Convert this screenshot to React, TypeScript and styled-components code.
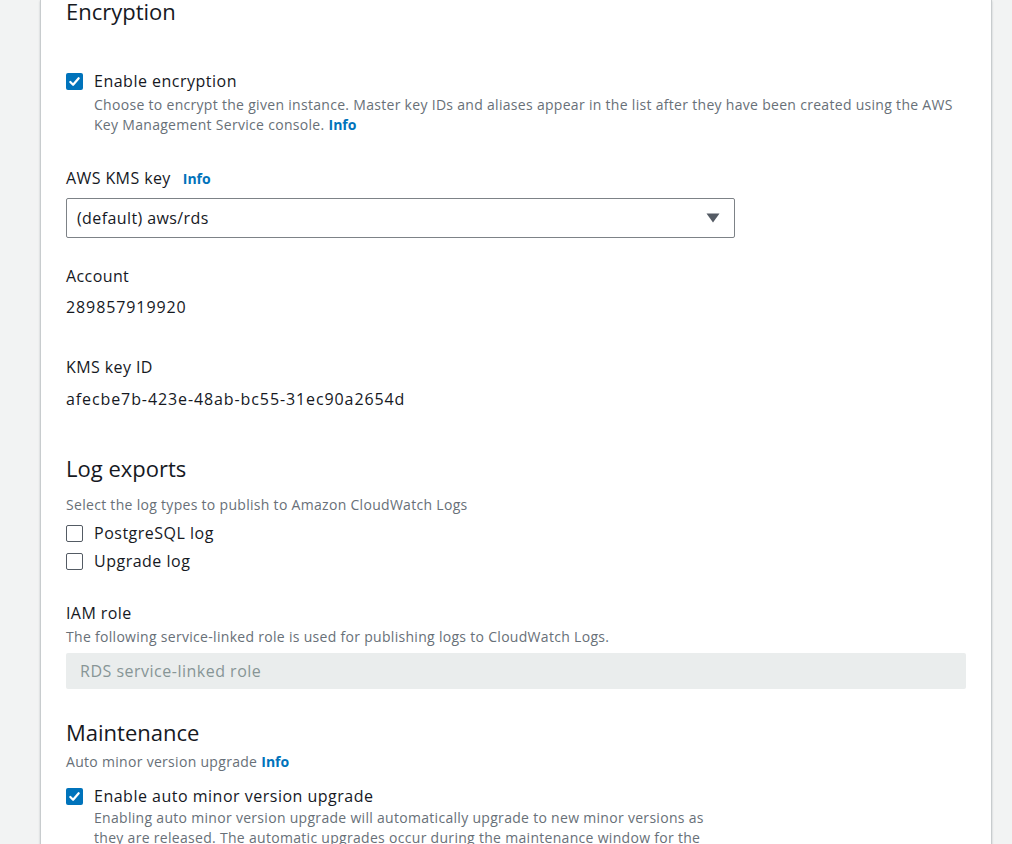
import styled, { createGlobalStyle } from "styled-components";

const GlobalStyle = createGlobalStyle`
  html, body {
    margin: 0;
    padding: 0;
    background: #f2f3f3;
  }
  body {
    font-family: "Open Sans", "Noto Sans", Arial, sans-serif;
    color: #16191f;
  }
`;

const Page = styled.div`
  width: 1012px;
  height: 844px;
  overflow: hidden;
  background: #f2f3f3;
`;

const Panel = styled.div`
  margin-left: 40px;
  width: 952px;
  min-height: 900px;
  background: #ffffff;
  border-left: 1px solid #c8ccce;
  border-right: 1px solid #c8ccce;
  box-shadow: 0 1px 2px rgba(0, 28, 36, 0.2);
  padding: 0 25px;
  box-sizing: border-box;
  display: flex;
  flex-direction: column;
`;

const Heading = styled.h2<{ $mt?: number }>`
  margin: ${({ $mt }) => $mt ?? 0}px 0 0;
  font-size: 22px;
  line-height: 26px;
  font-weight: 400;
  color: #16191f;
`;

const Label = styled.div<{ $mt?: number }>`
  margin-top: ${({ $mt }) => $mt ?? 0}px;
  font-size: 16px;
  line-height: 22px;
  letter-spacing: 0.4px;
  color: #16191f;
  display: flex;
  align-items: baseline;
`;

const Value = styled.div<{ $mt?: number }>`
  margin-top: ${({ $mt }) => $mt ?? 0}px;
  font-size: 16px;
  line-height: 22px;
  letter-spacing: 0.9px;
  color: #16191f;
`;

const Description = styled.div<{ $mt?: number; $indent?: boolean }>`
  margin-top: ${({ $mt }) => $mt ?? 0}px;
  padding-left: ${({ $indent }) => ($indent ? 28 : 0)}px;
  font-size: 14px;
  line-height: 20px;
  letter-spacing: 0.3px;
  color: #687078;
`;

const InfoLink = styled.a<{ $gap?: number }>`
  margin-left: ${({ $gap }) => $gap ?? 4}px;
  font-size: 14px;
  font-weight: 700;
  letter-spacing: 0;
  color: #0073bb;
  text-decoration: none;
  cursor: pointer;
`;

const CheckRow = styled.label<{ $mt?: number }>`
  margin-top: ${({ $mt }) => $mt ?? 0}px;
  display: flex;
  align-items: center;
  gap: 11px;
  height: 24px;
  font-size: 16px;
  letter-spacing: 0.5px;
  color: #16191f;
  cursor: pointer;
`;

const Box = styled.span<{ $checked?: boolean }>`
  width: 17px;
  height: 17px;
  box-sizing: border-box;
  border-radius: 2px;
  border: ${({ $checked }) => ($checked ? "none" : "1.5px solid #545b64")};
  background: ${({ $checked }) => ($checked ? "#0073bb" : "#ffffff")};
  display: flex;
  align-items: center;
  justify-content: center;
  flex-shrink: 0;
`;

const Select = styled.div<{ $mt?: number }>`
  margin-top: ${({ $mt }) => $mt ?? 0}px;
  width: 669px;
  height: 40px;
  box-sizing: border-box;
  border: 1px solid #7d8287;
  border-radius: 2px;
  display: flex;
  align-items: center;
  justify-content: space-between;
  padding: 0 14px 0 10px;
  font-size: 16px;
  letter-spacing: 0.4px;
  color: #16191f;
`;

const DisabledInput = styled.div<{ $mt?: number }>`
  margin-top: ${({ $mt }) => $mt ?? 0}px;
  height: 36px;
  background: #eaeded;
  border-radius: 2px;
  display: flex;
  align-items: center;
  padding-left: 14px;
  font-size: 16px;
  letter-spacing: 0.5px;
  color: #879596;
`;

const Check = ({ checked, label, mt }: { checked?: boolean; label: string; mt?: number }) => (
  <CheckRow $mt={mt}>
    <Box $checked={checked}>
      {checked ? (
        <svg width="13" height="13" viewBox="0 0 14 14">
          <polyline
            points="2.5,7.5 5.5,10.5 11.5,3.5"
            fill="none"
            stroke="#ffffff"
            strokeWidth="2.4"
            strokeLinecap="round"
            strokeLinejoin="round"
          />
        </svg>
      ) : null}
    </Box>
    {label}
  </CheckRow>
);

const App = () => {
  return (
    <Page>
      <GlobalStyle />
      <Panel>
        <Heading $mt={-2}>Encryption</Heading>

        <Check checked label="Enable encryption" mt={45} />
        <Description $mt={2} $indent>
          Choose to encrypt the given instance. Master key IDs and aliases appear in the list after they have been created using the AWS
          <br />
          Key Management Service console.
          <InfoLink>Info</InfoLink>
        </Description>

        <Label $mt={32}>
          AWS KMS key
          <InfoLink $gap={12}>Info</InfoLink>
        </Label>
        <Select $mt={8}>
          <span>(default) aws/rds</span>
          <svg width="14" height="10" viewBox="0 0 14 10">
            <polygon points="0.5,0.5 13.5,0.5 7,9.5" fill="#545b64" />
          </svg>
        </Select>

        <Label $mt={27}>Account</Label>
        <Value $mt={9}>289857919920</Value>

        <Label $mt={38}>KMS key ID</Label>
        <Value $mt={10}>afecbe7b-423e-48ab-bc55-31ec90a2654d</Value>

        <Heading $mt={45}>Log exports</Heading>
        <Description $mt={14}>Select the log types to publish to Amazon CloudWatch Logs</Description>
        <Check label="PostgreSQL log" mt={6} />
        <Check label="Upgrade log" mt={4} />

        <Label $mt={29}>IAM role</Label>
        <Description $mt={3}>
          The following service-linked role is used for publishing logs to CloudWatch Logs.
        </Description>
        <DisabledInput $mt={6}>RDS service-linked role</DisabledInput>

        <Heading $mt={30}>Maintenance</Heading>
        <Description $mt={7}>
          Auto minor version upgrade
          <InfoLink>Info</InfoLink>
        </Description>
        <Check checked label="Enable auto minor version upgrade" mt={12} />
        <Description $mt={0} $indent>
          Enabling auto minor version upgrade will automatically upgrade to new minor versions as
          <br />
          they are released. The automatic upgrades occur during the maintenance window for the
        </Description>
      </Panel>
    </Page>
  );
};

export default App;
